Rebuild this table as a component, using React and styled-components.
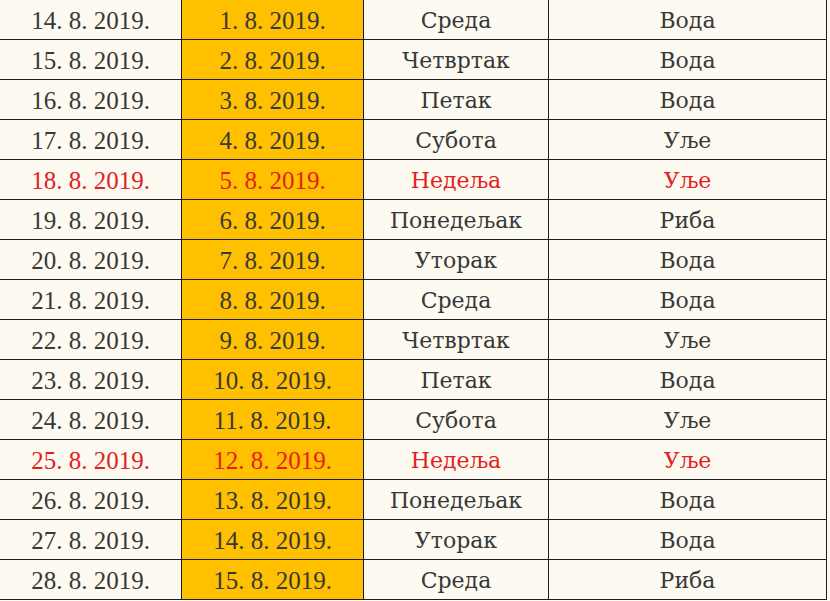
import React from "react";
import styled, { createGlobalStyle } from "styled-components";

const GlobalStyle = createGlobalStyle`
  html, body {
    margin: 0;
    padding: 0;
    background: #fdfbf1;
    overflow: hidden;
  }
`;

const widths = [182, 182, 185, 278];

const rows = [
  ["14. 8. 2019.", "1. 8. 2019.", "Среда", "Вода"],
  ["15. 8. 2019.", "2. 8. 2019.", "Четвртак", "Вода"],
  ["16. 8. 2019.", "3. 8. 2019.", "Петак", "Вода"],
  ["17. 8. 2019.", "4. 8. 2019.", "Субота", "Уље"],
  ["18. 8. 2019.", "5. 8. 2019.", "Недеља", "Уље", true],
  ["19. 8. 2019.", "6. 8. 2019.", "Понедељак", "Риба"],
  ["20. 8. 2019.", "7. 8. 2019.", "Уторак", "Вода"],
  ["21. 8. 2019.", "8. 8. 2019.", "Среда", "Вода"],
  ["22. 8. 2019.", "9. 8. 2019.", "Четвртак", "Уље"],
  ["23. 8. 2019.", "10. 8. 2019.", "Петак", "Вода"],
  ["24. 8. 2019.", "11. 8. 2019.", "Субота", "Уље"],
  ["25. 8. 2019.", "12. 8. 2019.", "Недеља", "Уље", true],
  ["26. 8. 2019.", "13. 8. 2019.", "Понедељак", "Вода"],
  ["27. 8. 2019.", "14. 8. 2019.", "Уторак", "Вода"],
  ["28. 8. 2019.", "15. 8. 2019.", "Среда", "Риба"],
];

export default function App() {
  return (
    <>
      <GlobalStyle />
      <Calendar>
        <colgroup>
          {widths.map((w, i) => (
            <Col key={i} $w={w} />
          ))}
        </colgroup>
        <tbody>
          {rows.map(([newDate, oldDate, day, fast, sunday]) => (
            <Row key={newDate}>
              <Cell $red={sunday}>{newDate}</Cell>
              <Cell $red={sunday} $old>{oldDate}</Cell>
              <Cell $red={sunday} $word>{day}</Cell>
              <Cell $red={sunday} $word>{fast}</Cell>
            </Row>
          ))}
        </tbody>
      </Calendar>
    </>
  );
}

const Calendar = styled.table`
  border-collapse: collapse;
  table-layout: fixed;
  width: 827px;
  margin: -1px 0 0 -1px;
  background: #fdfbf1;
`;

const Col = styled.col`
  width: ${(p) => p.$w}px;
`;

const Row = styled.tr`
  height: 40px;
`;

const Cell = styled.td`
  border: 1.5px solid #1e1e1e;
  padding: ${(p) => (p.$word ? "3px 0 0" : "1px 0 0")};
  text-align: center;
  vertical-align: middle;
  line-height: 1;
  font-family: ${(p) =>
    p.$word
      ? `"DejaVu Serif", "Liberation Serif", serif`
      : `"Liberation Serif", "Times New Roman", serif`};
  font-size: ${(p) => (p.$word ? "22px" : "25px")};
  color: ${(p) => (p.$red ? "#e3201f" : "#383838")};
  background: ${(p) => (p.$old ? "#ffc000" : "transparent")};
`;
